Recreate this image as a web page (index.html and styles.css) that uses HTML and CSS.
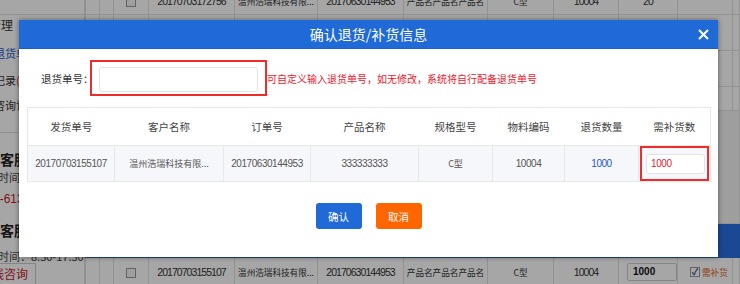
FILE: index.html
```html
<!DOCTYPE html>
<html lang="zh-CN">
<head>
<meta charset="utf-8">
<title>确认退货/补货信息</title>
<link rel="stylesheet" href="styles.css">
</head>
<body>
<div class="page">
  <aside class="side">
    <div class="side-top"></div>
    <div class="nav n1">售后管理</div>
    <div class="nav n2 link">退货单号</div>
    <div class="nav n3">退货记录<span class="red">(0)</span></div>
    <div class="nav n4">咨询记录</div>
    <div class="side-sep"></div>
    <div class="svc s1">客服热线</div>
    <div class="info i1">时间：8:30-17:30</div>
    <div class="phone">0577-61338888</div>
    <div class="svc s2">客服热线</div>
    <div class="info i2">时间：8:30-17:30</div>
    <div class="chat">在线咨询</div>
  </aside>
  <div class="main">
    <table class="bg-table">
      <colgroup>
        <col style="width:14px"><col style="width:14px"><col style="width:35px"><col style="width:86px"><col style="width:83px"><col style="width:86px"><col style="width:84px"><col style="width:66px"><col style="width:65px"><col style="width:59px"><col style="width:55px"><col>
      </colgroup>
      <tr class="r-top">
        <td></td><td></td><td><span class="cb"></span></td><td class="num">20170703172756</td><td>温州浩瑞科技有限...</td><td class="num">20170630144953</td><td>产品名产品名产品名</td><td>C型</td><td class="num">10004</td><td class="num">20</td><td></td><td></td>
      </tr>
      <tr class="r-mid"><td></td><td></td><td></td><td></td><td></td><td></td><td></td><td></td><td></td><td></td><td></td><td></td></tr>
      <tr class="r-mid"><td></td><td></td><td></td><td></td><td></td><td></td><td></td><td></td><td></td><td></td><td></td><td></td></tr>
      <tr class="r-short"><td></td><td></td><td></td><td></td><td></td><td></td><td></td><td></td><td></td><td></td><td></td><td></td></tr>
      <tr class="r-band"><td colspan="12"></td></tr>
      <tr class="r-blue"><td colspan="12"></td></tr>
      <tr class="r-bottom">
        <td></td><td></td><td><span class="cb"></span></td><td class="num">20170703155107</td><td>温州浩瑞科技有限...</td><td class="num">20170630144953</td><td>产品名产品名产品名</td><td>C型</td><td class="num">10004</td><td class="qty-cell"><span class="qty">1000</span></td><td class="need-cell"><span class="cb checked">✓</span><span class="need">需补货</span></td><td></td>
      </tr>
    </table>
  </div>
</div>

<div class="mask"></div>

<div class="modal">
  <div class="modal-head">
    <span></span>
    <span class="modal-title">确认退货/补货信息</span>
    <button class="close" type="button" aria-label="关闭">
      <svg width="11" height="11" viewBox="0 0 11 11"><path d="M1 1 L10 10 M10 1 L1 10" stroke="#fff" stroke-width="2" fill="none"/></svg>
    </button>
  </div>
  <div class="modal-body">
    <div class="form-row">
      <label class="label">退货单号：</label>
      <div class="mark">
        <input class="txt" type="text">
      </div>
      <span class="hint">可自定义输入退货单号，如无修改，系统将自行配备退货单号</span>
    </div>
    <table class="grid">
      <colgroup>
        <col style="width:87px"><col style="width:109px"><col style="width:87px"><col style="width:108px"><col style="width:74px"><col style="width:72px"><col style="width:74px"><col style="width:72px">
      </colgroup>
      <thead>
        <tr><th>发货单号</th><th>客户名称</th><th>订单号</th><th>产品名称</th><th>规格型号</th><th>物料编码</th><th>退货数量</th><th>需补货数</th></tr>
      </thead>
      <tbody>
        <tr>
          <td class="num">20170703155107</td>
          <td>温州浩瑞科技有限...</td>
          <td class="num">20170630144953</td>
          <td class="num">333333333</td>
          <td>C型</td>
          <td class="num">10004</td>
          <td class="num blue">1000</td>
          <td class="mark-td"><div class="mark-cell"><span class="cell-input">1000</span></div></td>
        </tr>
      </tbody>
    </table>
    <div class="actions">
      <button class="btn btn-ok" type="button">确认</button>
      <button class="btn btn-cancel" type="button">取消</button>
    </div>
  </div>
</div>
</body>
</html>
```

FILE: styles.css
```css
* { box-sizing: border-box; margin: 0; padding: 0; }
html, body { width: 740px; height: 284px; overflow: hidden; }
body {
  position: relative;
  font-family: "Noto Sans CJK SC", "Liberation Sans", sans-serif;
  color: #333;
  background: #fff;
}

/* ---------- background page ---------- */
.page { display: flex; height: 284px; }
.side {
  width: 85px;
  flex: none;
  border-right: 1px solid #ddd;
  overflow: hidden;
  display: flex;
  flex-direction: column;
  font-size: 11px;
  line-height: 14px;
  white-space: nowrap;
}
.side-top { height: 15px; flex: none; border-bottom: 1px solid #ddd; }
.nav { font-size: 12px; }
.n1 { margin-top: 3px; margin-left: -35px; }
.n2 { margin-top: 14px; margin-left: -6px; font-size: 11px; }
.link { color: #2356c8; }
.n3 { margin-top: 13px; margin-left: -28px; font-size: 11px; }
.red { color: #cc1f1f; }
.n4 { margin-top: 11px; margin-left: -6px; font-size: 11px; }
.side-sep { margin-top: 20px; border-top: 1px solid #ddd; height: 1px; flex: none; }
.svc { font-size: 14px; font-weight: bold; line-height: 18px; color: #222; }
.s1 { margin-top: 17px; }
.s2 { margin-top: 15px; }
.info { margin-left: -2px; color: #444; }
.i1 { margin-top: 2px; }
.i2 { margin-top: 10px; }
.phone { margin-top: 8px; margin-left: -27px; font-size: 12px; color: #c8202a; font-family: "Liberation Sans", sans-serif; }
.chat {
  margin-left: -10px;
  width: 46px;
  height: 24px;
  border: 1px solid #ccc;
  font-size: 12px;
  line-height: 20px;
  color: #c8202a;
  text-indent: -14px;
  padding-left: 3px;
}

.main { flex: 1; margin-top: -14px; }
.bg-table {
  border-collapse: collapse;
  table-layout: fixed;
  width: 655px;
  font-size: 8.6px;
  color: #333;
}
.bg-table td {
  border: 1px solid #e0e0e0;
  text-align: center;
  white-space: nowrap;
  overflow: hidden;
  padding: 0;
}
.bg-table .num { font-family: "Liberation Sans", sans-serif; font-size: 10.5px; letter-spacing: -0.95px; }
.r-top td { height: 28px; }
.r-mid td { height: 36px; }
.r-short td { height: 24px; }
.r-band td { height: 113px; background: #f3f3f3; }
.r-blue td { height: 34px; background: #2a6fe0; border-color: #2a6fe0; }
.r-bottom td { height: 28px; }
.cb {
  display: inline-block;
  width: 10px;
  height: 10px;
  border: 1px solid #999;
  background: #f4f4f4;
  vertical-align: middle;
  font-size: 9px;
  line-height: 8px;
  text-align: center;
}
.cb.checked { background: #fff; color: #1a3f8a; font-weight: bold; }
.qty-cell { text-align: right !important; }
.qty {
  display: inline-block;
  width: 50px;
  height: 18px;
  border: 1px solid #ccc;
  border-radius: 2px;
  text-align: left;
  padding-left: 5px;
  font: bold 10px/16px "Liberation Sans", sans-serif;
  color: #111;
  vertical-align: middle;
}
.need-cell { text-align: left !important; padding-left: 12px !important; }
.need { color: #e0661a; margin-left: 2px; vertical-align: middle; font-size: 8.6px; }

.mask {
  position: absolute;
  inset: 0;
  background: rgba(0, 0, 0, 0.35);
}

/* ---------- modal ---------- */
.modal {
  position: absolute;
  left: 19px;
  top: 20px;
  width: 699px;
  background: #fff;
  box-shadow: 0 0 5px rgba(0, 0, 0, 0.45);
}
.modal-head {
  height: 29px;
  background: #1f6ad6;
  border-bottom: 1px solid #1a5fc4;
  display: grid;
  grid-template-columns: 1fr auto 1fr;
  align-items: center;
  color: #fff;
}
.modal-title { font-size: 14px; line-height: 28px; letter-spacing: 0; }
.close {
  justify-self: end;
  margin-right: 9px;
  width: 11px;
  height: 11px;
  border: 0;
  background: none;
  display: flex;
}
.modal-body { padding: 11px 8px 28px; }

.form-row {
  display: flex;
  align-items: center;
  height: 36px;
  padding-left: 14px;
}
.label { width: 49px; font-size: 10.5px; color: #333; white-space: nowrap; }
.mark {
  width: 177px;
  height: 36px;
  border: 2px solid #ef2b2b;
  padding: 2px 7px 0;
  display: flex;
  align-items: center;
}
.txt {
  width: 159px;
  height: 25px;
  border: 1px solid #e2e2e2;
  border-radius: 3px;
  background: #fff;
  outline: none;
}
.hint { font-size: 10px; color: #e8212e; white-space: nowrap; }

.grid {
  margin-top: 11px;
  width: 683px;
  border-collapse: collapse;
  table-layout: fixed;
  border: 1px solid #e8e8e8;
}
.grid th {
  height: 38px;
  font-weight: normal;
  font-size: 10.5px;
  color: #444;
  text-align: center;
  border-bottom: 1px solid #e8e8e8;
  background: #fff;
}
.grid td {
  height: 35px;
  font-size: 9px;
  color: #555;
  text-align: center;
  background: #f5f7fa;
  border-right: 1px solid #e8e8e8;
  white-space: nowrap;
  overflow: hidden;
}
.grid .num { font-family: "Liberation Sans", sans-serif; font-size: 10px; letter-spacing: -0.45px; }
.grid .blue { color: #2457cc; }
.grid .mark-td { padding: 0; background: #f5f7fa; }
.mark-cell {
  height: 35px;
  margin: 0 1px 0 1px;
  border: 2px solid #ef2b2b;
  display: flex;
  align-items: center;
  justify-content: center;
}
.cell-input {
  width: 59px;
  height: 20px;
  margin-left: 2px;
  border: 1px solid #e3e3e3;
  border-radius: 3px;
  background: #fff;
  text-align: left;
  padding-left: 4px;
  font: 10px/18px "Liberation Sans", sans-serif;
  letter-spacing: -0.4px;
  color: #e8212e;
}

.actions {
  margin-top: 21px;
  display: flex;
  justify-content: center;
  gap: 14px;
}
.btn {
  width: 46px;
  height: 26px;
  border: 0;
  border-radius: 3px;
  color: #fff;
  font-family: "Noto Sans CJK SC", sans-serif;
  font-size: 10.5px;
}
.btn-ok { background: #1f6ad6; }
.btn-cancel { background: #ff6600; }
```
